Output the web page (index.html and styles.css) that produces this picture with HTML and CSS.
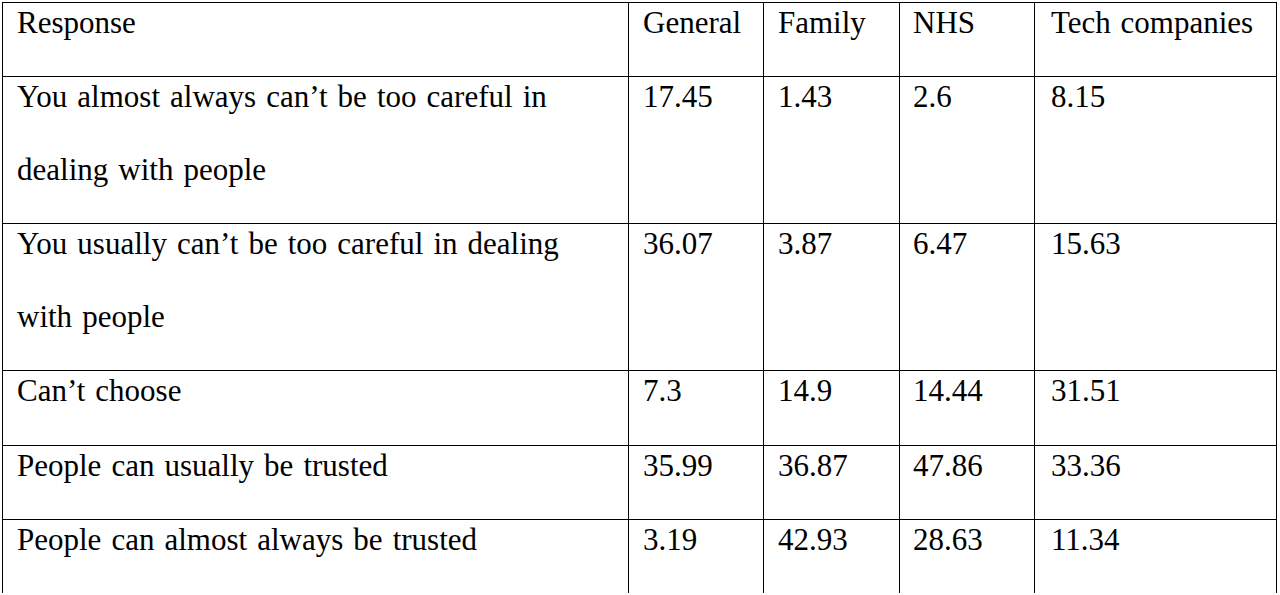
FILE: index.html
```html
<!DOCTYPE html>
<html lang="en">
<head>
<meta charset="utf-8">
<title>Trust table</title>
<link rel="stylesheet" href="styles.css">
</head>
<body>
<table class="trust">
  <colgroup>
    <col class="w1"><col class="w2"><col class="w3"><col class="w4"><col class="w5">
  </colgroup>
  <tr>
    <td class="c1"><p class="txt">Response</p></td>
    <td><p class="txt">General</p></td>
    <td><p class="txt">Family</p></td>
    <td class="c4"><p class="txt">NHS</p></td>
    <td class="c5"><p class="txt">Tech companies</p></td>
  </tr>
  <tr>
    <td class="c1"><p class="txt">You almost always can’t be too careful in<br>dealing with people</p></td>
    <td><p class="txt">17.45</p></td>
    <td><p class="txt">1.43</p></td>
    <td class="c4"><p class="txt">2.6</p></td>
    <td class="c5"><p class="txt">8.15</p></td>
  </tr>
  <tr>
    <td class="c1"><p class="txt">You usually can’t be too careful in dealing<br>with people</p></td>
    <td><p class="txt">36.07</p></td>
    <td><p class="txt">3.87</p></td>
    <td class="c4"><p class="txt">6.47</p></td>
    <td class="c5"><p class="txt">15.63</p></td>
  </tr>
  <tr class="tall">
    <td class="c1"><p class="txt">Can’t choose</p></td>
    <td><p class="txt">7.3</p></td>
    <td><p class="txt">14.9</p></td>
    <td class="c4"><p class="txt">14.44</p></td>
    <td class="c5"><p class="txt">31.51</p></td>
  </tr>
  <tr>
    <td class="c1"><p class="txt">People can usually be trusted</p></td>
    <td><p class="txt">35.99</p></td>
    <td><p class="txt">36.87</p></td>
    <td class="c4"><p class="txt">47.86</p></td>
    <td class="c5"><p class="txt">33.36</p></td>
  </tr>
  <tr class="last">
    <td class="c1"><p class="txt">People can almost always be trusted</p></td>
    <td><p class="txt">3.19</p></td>
    <td><p class="txt">42.93</p></td>
    <td class="c4"><p class="txt">28.63</p></td>
    <td class="c5"><p class="txt">11.34</p></td>
  </tr>
</table>
</body>
</html>
```

FILE: styles.css
```css
body {
  margin: 0;
  padding: 2px 0 0 2px;
  background: #ffffff;
  color: #000000;
  overflow: hidden;
}

.trust {
  border-collapse: separate;
  border-spacing: 0;
  table-layout: fixed;
  width: 1275px;
  border-top: 1px solid #000;
  border-left: 1px solid #000;
  font-family: "Liberation Serif", Tinos, "Times New Roman", serif;
  font-size: 31px;
  color: #000;
}

.w1 { width: 626px; }
.w2 { width: 135px; }
.w3 { width: 136px; }
.w4 { width: 135px; }
.w5 { width: 242px; }

.trust td {
  box-sizing: border-box;
  vertical-align: top;
  border-right: 1px solid #000;
  border-bottom: 1px solid #000;
  padding: 0 4px 0 14px;
  font-family: "Liberation Serif", Tinos, "Times New Roman", serif;
  white-space: nowrap;
  overflow: hidden;
}

.trust td.c1 {
  word-spacing: 2.3px;
}

.trust .last td {
  border-bottom: none;
}

.trust td.c4 {
  padding-left: 13px;
}

.trust td.c5 {
  padding-left: 16px;
  word-spacing: 2px;
}

.txt {
  margin: -17px 0 0;
  padding-bottom: 17px;
  line-height: 73px;
}

.tall .txt {
  padding-bottom: 18px;
}
```
